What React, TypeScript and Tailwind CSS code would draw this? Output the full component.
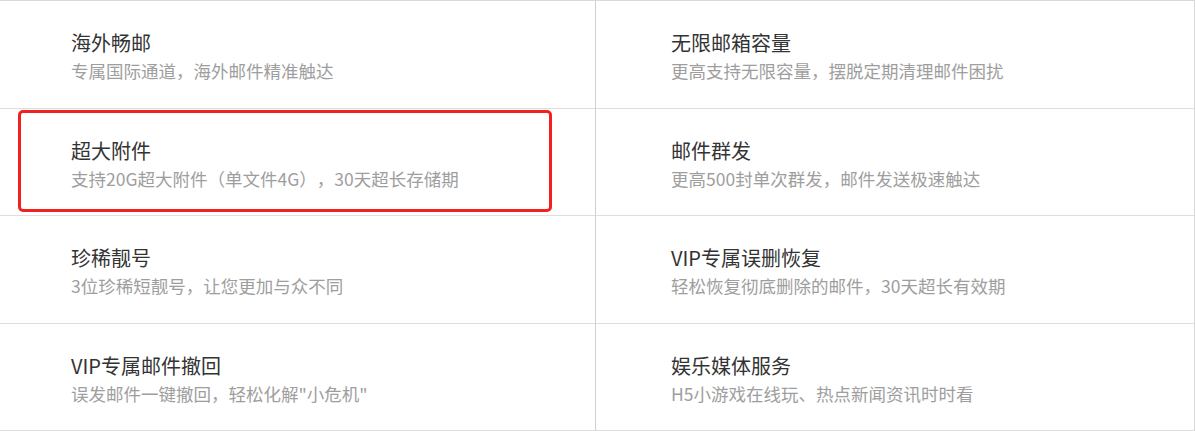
import React from "react";

const rows: { t: string; s: string; h: string }[][] = [
  [
    { t: "海外畅邮", s: "专属国际通道，海外邮件精准触达", h: "h-[108px]" },
    { t: "无限邮箱容量", s: "更高支持无限容量，摆脱定期清理邮件困扰", h: "h-[108px]" },
  ],
  [
    { t: "超大附件", s: "支持20G超大附件（单文件4G），30天超长存储期", h: "h-[107px]" },
    { t: "邮件群发", s: "更高500封单次群发，邮件发送极速触达", h: "h-[107px]" },
  ],
  [
    { t: "珍稀靓号", s: "3位珍稀短靓号，让您更加与众不同", h: "h-[108px]" },
    { t: "VIP专属误删恢复", s: "轻松恢复彻底删除的邮件，30天超长有效期", h: "h-[108px]" },
  ],
  [
    { t: "VIP专属邮件撤回", s: "误发邮件一键撤回，轻松化解\"小危机\"", h: "h-[107px]" },
    { t: "娱乐媒体服务", s: "H5小游戏在线玩、热点新闻资讯时时看", h: "h-[107px]" },
  ],
];

export default function App() {
  return (
    <div
      className="w-[1195px] h-[431px] bg-white overflow-hidden [text-spacing-trim:space-all]"
      style={{ fontFamily: '"Microsoft YaHei", "Noto Sans CJK SC", "Noto Sans", sans-serif' }}
    >
      <div className="w-[1195px] border-t border-r border-[#d9d9d9]">
        {rows.map((row, ri) => (
          <div key={ri} className="flex">
            {row.map((c, ci) => (
              <div
                key={ci}
                className={`relative ${c.h} border-b border-[#dedede] ${
                  ci === 0 ? "w-[596px] border-r border-r-[#d0d0d0] pl-[71px]" : "flex-1 pl-[75px]"
                } pt-[28px]`}
              >
                {ri === 1 && ci === 0 && (
                  <div className="absolute left-[18px] top-[1px] w-[534px] h-[102px] border-[3px] border-[#f32020] rounded-[5px]" />
                )}
                <div className="text-[20px] leading-[28px] text-[#333333] whitespace-nowrap">{c.t}</div>
                <div className="text-[17.5px] leading-[28px] text-[#9e9e9e] whitespace-nowrap [text-spacing-trim:space-all]">{c.s}</div>
              </div>
            ))}
          </div>
        ))}
      </div>
    </div>
  );
}
